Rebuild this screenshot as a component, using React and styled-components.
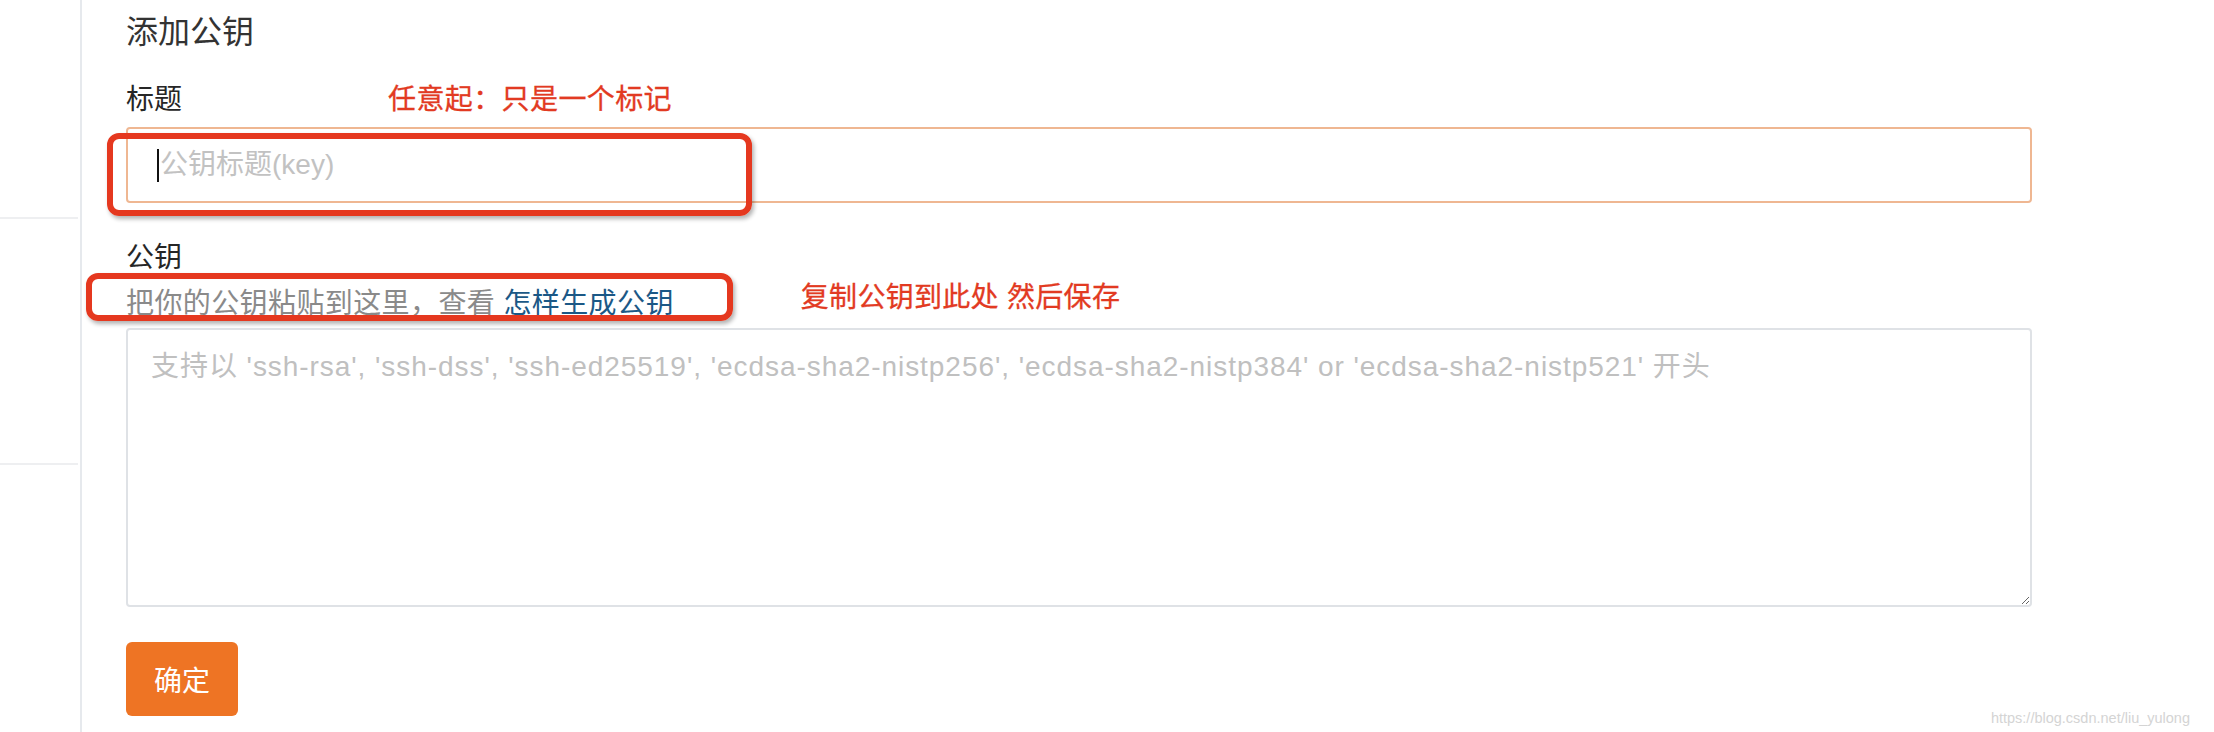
import React from "react";
import styled, { createGlobalStyle } from "styled-components";

const FONT = `"Liberation Sans", "Noto Sans CJK SC", sans-serif`;

const Global = createGlobalStyle`
  html, body { margin: 0; padding: 0; background: #ffffff; }
  body { font-family: ${FONT}; overflow: hidden; }
  * { box-sizing: border-box; }
`;

const Page = styled.div`
  display: flex;
  width: 2214px;
  height: 732px;
  position: relative;
  background: #fff;
`;

const Sidebar = styled.aside`
  width: 82px;
  flex: none;
  border-right: 2px solid #e6e9ed;
  display: flex;
  flex-direction: column;
`;

const SideBlock = styled.div`
  height: ${(p) => p.$h}px;
  margin-right: 2px;
  border-bottom: 2px solid #eeeff1;
`;

const Main = styled.main`
  position: relative;
  flex: 1;
  padding-left: 44px;
`;

const Form = styled.form`
  width: 1906px;
  display: flex;
  flex-direction: column;
  align-items: flex-start;
`;

const Title = styled.h2`
  margin: 12px 0 0;
  font-size: 32px;
  line-height: 40px;
  font-weight: 400;
  color: #333;
`;

const Row = styled.div`
  display: flex;
  align-items: center;
  margin-top: ${(p) => p.$mt}px;
  height: 36px;
`;

const Label = styled.label`
  font-size: 28px;
  line-height: 36px;
  color: #262626;
`;

const Note = styled.span`
  font-size: 28px;
  line-height: 36px;
  color: #e23a22;
  margin-left: ${(p) => p.$ml}px;
  transform: translateY(${(p) => p.$dy || 0}px);
  letter-spacing: ${(p) => p.$ls || 0}px;
  -webkit-text-stroke: 0.3px #e23a22;
`;

const InputBox = styled.div`
  width: 100%;
  height: 76px;
  margin-top: 9px;
  border: 2px solid #efb792;
  border-radius: 4px;
  display: flex;
  align-items: center;
  padding-left: 29px;
  font-size: 28px;
  line-height: 36px;
`;

const Caret = styled.span`
  display: inline-block;
  width: 2px;
  height: 33px;
  background: #111;
  margin-right: 1px;
`;

const Placeholder = styled.span`
  color: #c2c2c2;
`;

const Help = styled.span`
  font-size: 28px;
  line-height: 36px;
  color: #8a8a8a;
  white-space: pre;
  letter-spacing: 0.4px;
`;

const Link = styled.a`
  color: #1b5886;
  text-decoration: none;
`;

const TextArea = styled.textarea`
  display: block;
  width: 100%;
  height: 279px;
  margin-top: 6px;
  border: 2px solid #dfe2e6;
  border-radius: 4px;
  padding: 19px 23px;
  font-family: ${FONT};
  font-size: 28px;
  line-height: 36px;
  color: #333;
  resize: vertical;
  outline: none;
  letter-spacing: 0.95px;
  &::placeholder { color: #c0c0c0; }
`;

const Button = styled.button`
  margin-top: 35px;
  width: 112px;
  height: 74px;
  border: none;
  border-radius: 6px;
  background: #ee7424;
  color: #fff;
  font-family: ${FONT};
  font-size: 28px;
  cursor: pointer;
`;

const Mark = styled.div`
  position: absolute;
  left: ${(p) => p.$x}px;
  top: ${(p) => p.$y}px;
  width: ${(p) => p.$w}px;
  height: ${(p) => p.$h}px;
  border: 6px solid #e5381f;
  border-radius: 12px;
  box-shadow: 2px 3px 4px rgba(0, 0, 0, 0.3);
  pointer-events: none;
`;

const Watermark = styled.span`
  position: absolute;
  right: 24px;
  bottom: 6px;
  font-family: "Liberation Sans", sans-serif;
  font-size: 14.5px;
  color: #d4d4d4;
`;

export default function App() {
  return (
    <>
      <Global />
      <Page>
        <Sidebar>
          <SideBlock $h={219} />
          <SideBlock $h={246} />
        </Sidebar>
        <Main>
          <Form onSubmit={(e) => e.preventDefault()}>
            <Title>添加公钥</Title>
            <Row $mt={30}>
              <Label>标题</Label>
              <Note $ml={206} $ls={0.4}>任意起：只是一个标记</Note>
            </Row>
            <InputBox>
              <Caret />
              <Placeholder>公钥标题(key)</Placeholder>
            </InputBox>
            <Row $mt={37}>
              <Label>公钥</Label>
            </Row>
            <Row $mt={10}>
              <Help>
                把你的公钥粘贴到这里，查看 <Link href="#">怎样生成公钥</Link>
              </Help>
              <Note $ml={127} $dy={-6} $ls={0.3}>复制公钥到此处 然后保存</Note>
            </Row>
            <TextArea placeholder="支持以 'ssh-rsa', 'ssh-dss', 'ssh-ed25519', 'ecdsa-sha2-nistp256', 'ecdsa-sha2-nistp384' or 'ecdsa-sha2-nistp521' 开头" />
            <Button type="submit">确定</Button>
          </Form>
          <Mark $x={25} $y={133} $w={645} $h={83} />
          <Mark $x={4} $y={273} $w={647} $h={48} />
        </Main>
        <Watermark>https://blog.csdn.net/liu_yulong</Watermark>
      </Page>
    </>
  );
}
